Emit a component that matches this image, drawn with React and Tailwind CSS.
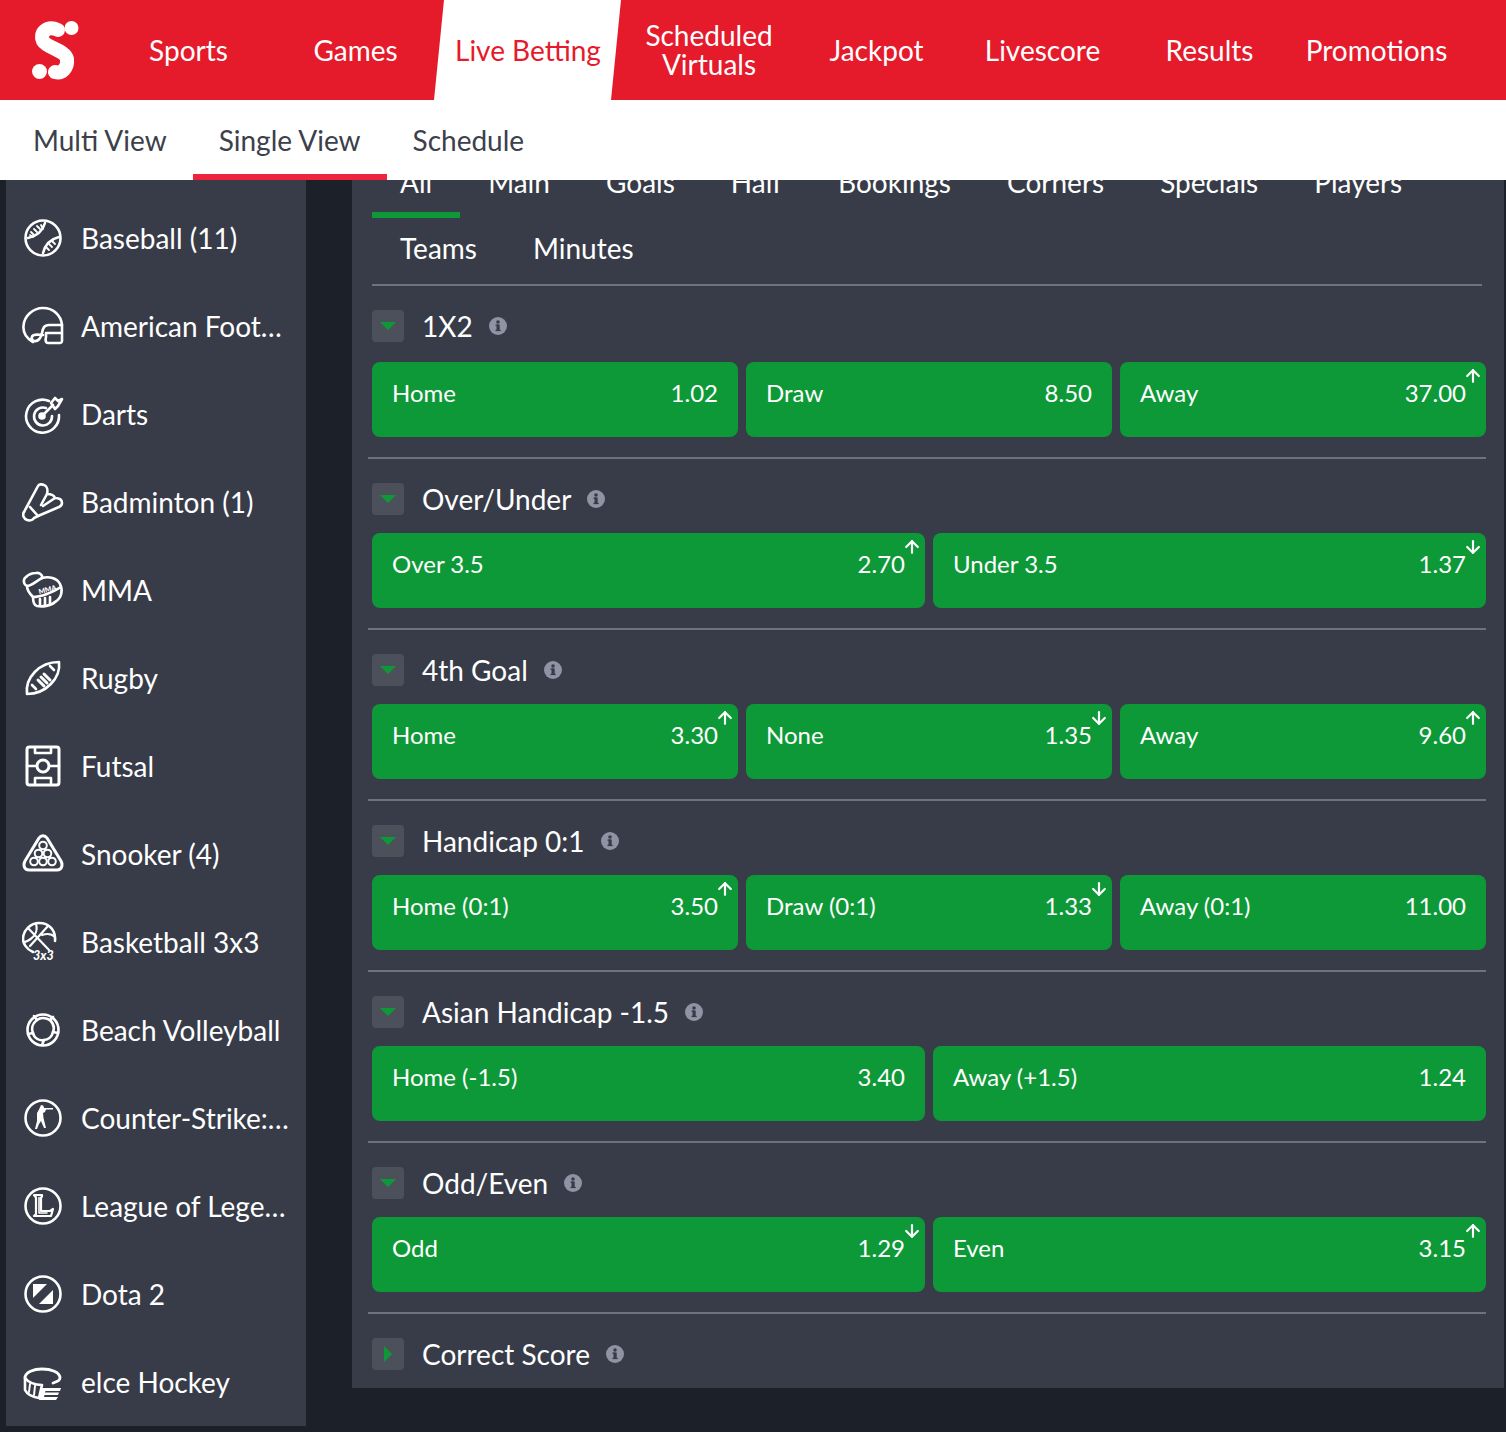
import { ArrowUp, ArrowDown } from 'lucide-react'

const font = "[font-family:Lato,'Liberation_Sans',sans-serif]"

const navItems = [
  { label: 'Sports', width: 'w-[167px]' },
  { label: 'Games', width: 'w-[167px]' },
  { label: 'Live Betting', width: 'w-[177px]', active: true },
  { label: 'Scheduled Virtuals', width: 'w-[186px]', small: true },
  { label: 'Jackpot', width: 'w-[149px]' },
  { label: 'Livescore', width: 'w-[183px]' },
  { label: 'Results', width: 'w-[151px]' },
  { label: 'Promotions', width: 'w-[183px]' },
]

const s = { fill: 'none', stroke: 'white', strokeWidth: 2.6, strokeLinecap: 'round', strokeLinejoin: 'round' }

function Icon({ children }) {
  return (
    <svg width="42" height="42" viewBox="0 0 42 42" className="shrink-0">
      {children}
    </svg>
  )
}

const icons = {
  baseball: (
    <g {...s}>
      <circle cx="21" cy="21" r="17.5" />
      <path d="M23 6C21 13 15 19 6 21M37 20C29 22 23 28 21 36" />
      <path d="M15 9l3 3M12 12l3 3M9 15l3 3M30 24l3 3M27 27l3 3M24 30l3 3M19 8l2 4M8 18l3 2" strokeWidth="1.8" />
    </g>
  ),
  football: (
    <g {...s}>
      <path d="M11 37C4 33 1 27 1.500 21C2 11 11 3 21 3C31 3 39 10 40 20H27C22 20 21 23 20 28C19 33 16 37 12 36C9 35 9 31 12 30C15 29 18 30 21 30" />
      <path d="M24 28H40M40 20V36C40 37 39 38 38 38H26C24 38 23 36 24 32V28" />
    </g>
  ),
  darts: (
    <g {...s}>
      <path d="M27 8A16.500 16.500 0 1 0 37 22" />
      <path d="M24 15A9 9 0 1 0 30 23" />
      <circle cx="20" cy="23" r="2.500" fill="white" />
      <path d="M20 23L31 12" />
      <path d="M29 10L33 5L36 8L40 6L36 13L33 16Z" />
    </g>
  ),
  badminton: (
    <g {...s}>
      <path d="M2 31L16 5C17 3 20 3 22 4C25 5 26 9 25 13C29 13 32 14 33 17C37 17 40 18 40 22C40 24 39 25 37 26L16 35" />
      <path d="M25 13L19 24M33 17L21 25" />
      <path d="M2 31C0 34 2 38 5 39C8 40 11 39 12 37L16 35L8 26" />
    </g>
  ),
  mma: (
    <g {...s}>
      <path d="M5 17C1 15 1 10 4 8C6 6 10 4 14 4C18 3 21 7 20 9C27 7 35 9 38 15C41 21 40 29 33 33C29 37 20 38 15 37C11 36 11 31 11 28C8 25 5 21 5 17Z" />
      <path d="M5 17C9 17 13 13 20 9M11 28C18 28 30 24 39 18M18 30V36M23 29V36M28 28V35" />
      <text x="26" y="23" fontSize="7" fontWeight="900" fill="white" stroke="none" textAnchor="middle" transform="rotate(-14 26 23)" fontFamily="Lato">MMA</text>
    </g>
  ),
  rugby: (
    <g {...s}>
      <path d="M5 37C3 21 17 5 37 5C39 21 24 37 5 37Z" />
      <path d="M10 28L14 32M28 9L32 13" />
      <path d="M16 23L22 29M19 20L25 26M22 17L28 23" strokeWidth="3" />
    </g>
  ),
  futsal: (
    <g {...s}>
      <rect x="5" y="2" width="32" height="38" rx="2.500" strokeWidth="3" />
      <path d="M5 21H14M28 21H37M13 3V8H29V3M13 39V33H29V39" strokeWidth="2.600" />
      <circle cx="21" cy="21" r="6" strokeWidth="3" />
    </g>
  ),
  snooker: (
    <g {...s}>
      <path d="M17 5C19 2 23 2 25 5L39 28C41 32 40 37 35 37H7C2 37 1 32 3 28Z" strokeWidth="3" />
      <g strokeWidth="2">
        <circle cx="21" cy="12.500" r="3.800" />
        <circle cx="16.500" cy="20.500" r="3.800" />
        <circle cx="25.500" cy="20.500" r="3.800" />
        <circle cx="12" cy="28.500" r="3.800" />
        <circle cx="21" cy="28.500" r="3.800" />
        <circle cx="30" cy="28.500" r="3.800" />
      </g>
    </g>
  ),
  basket: (
    <g>
      <g {...s}>
        <path d="M11 31C4 28 1 22 1 18C1 9 9 2 17 2C27 2 34 9 33 20" />
        <path d="M6 7L27 29M26 5L8 25M14 3C16 10 13 17 3 21M20 14C26 12 30 13 33 16" strokeWidth="2.200" />
      </g>
      <text x="11" y="39" fontSize="12.500" fontWeight="900" fontStyle="italic" fill="white" fontFamily="Lato">3x3</text>
    </g>
  ),
  beach: (
    <g {...s}>
      <circle cx="21" cy="21" r="15.500" />
      <path d="M15 11C19 8 24 9 28 11C31 14 33 18 31 23C30 28 26 31 22 31C17 32 12 29 11 24C9 19 11 14 15 11Z" />
      <path d="M15 11L12 7M28 11L31 8M31 23L36 24M22 31L20 36M11 24L6 25" />
    </g>
  ),
  cs: (
    <g>
      <circle cx="21" cy="21" r="17.500" {...s} />
      <path d="M19 8C21 8 22 9 22 11H31V12.500H24L23 15L21 16L21.500 21L24 31H22L19 24L17 27L15 32H13L15 24L15 16L17 12.500Z" fill="white" />
    </g>
  ),
  lol: (
    <g {...s}>
      <circle cx="21" cy="21" r="17.500" />
      <path d="M12 10H20V11.500L19 12.500V26H28L31 24L29 31H12L14 29V12.500Z" strokeWidth="2.200" />
      <path d="M17 12.500V28H25" strokeWidth="1.600" />
    </g>
  ),
  dota: (
    <g>
      <circle cx="21" cy="21" r="17.500" {...s} />
      <path d="M11 11H21L25 11L11 25Z" fill="white" />
      <path d="M31 31H21L17 31L31 17Z" fill="white" />
    </g>
  ),
  hockey: (
    <g>
      <g {...s}>
        <path d="M3 17C3 11 12 8 20 8C29 8 38 11 38 17C38 20 34 21 31 22" strokeWidth="2.800" />
        <path d="M3 17C7 22 14 24 20 24L17 37C10 36 5 33 3 29Z" />
        <path d="M8 23L7 31M13 25L12 34" strokeWidth="2" />
      </g>
      <path d="M20 27H39L38 30H23.500L23 31.500H37L36 34H22.500L22 36H36L34 39H17Z" fill="white" />
    </g>
  ),
}

const sports = [
  { name: 'Baseball (11)', icon: 'baseball' },
  { name: 'American Football', icon: 'football' },
  { name: 'Darts', icon: 'darts' },
  { name: 'Badminton (1)', icon: 'badminton' },
  { name: 'MMA', icon: 'mma' },
  { name: 'Rugby', icon: 'rugby' },
  { name: 'Futsal', icon: 'futsal' },
  { name: 'Snooker (4)', icon: 'snooker' },
  { name: 'Basketball 3x3', icon: 'basket' },
  { name: 'Beach Volleyball', icon: 'beach' },
  { name: 'Counter-Strike: GO', icon: 'cs' },
  { name: 'League of Legends', icon: 'lol' },
  { name: 'Dota 2', icon: 'dota' },
  { name: 'elce Hockey', icon: 'hockey' },
]

const tabsTop = ['All', 'Main', 'Goals', 'Half', 'Bookings', 'Corners', 'Specials', 'Players']

const markets = [
  { title: '1X2', gap: 'mt-5', outcomes: [['Home', '1.02'], ['Draw', '8.50'], ['Away', '37.00', 'up']] },
  { title: 'Over/Under', outcomes: [['Over 3.5', '2.70', 'up'], ['Under 3.5', '1.37', 'down']] },
  { title: '4th Goal', outcomes: [['Home', '3.30', 'up'], ['None', '1.35', 'down'], ['Away', '9.60', 'up']] },
  { title: 'Handicap 0:1', outcomes: [['Home (0:1)', '3.50', 'up'], ['Draw (0:1)', '1.33', 'down'], ['Away (0:1)', '11.00']] },
  { title: 'Asian Handicap -1.5', outcomes: [['Home (-1.5)', '3.40'], ['Away (+1.5)', '1.24']] },
  { title: 'Odd/Even', outcomes: [['Odd', '1.29', 'down'], ['Even', '3.15', 'up']] },
]

function Logo() {
  return (
    <svg width="105" height="100" viewBox="0 0 105 100" className="shrink-0">
      <circle cx="71.500" cy="28" r="7" fill="white" />
      <circle cx="39.500" cy="71.500" r="7.500" fill="white" />
      <path d="M58 30C47 25 39 33 43 41C47 48 65 50 67 59C68 68 62 74 55 72" fill="none" stroke="white" strokeWidth="14" strokeLinecap="round" />
    </svg>
  )
}

function NavItem({ item }) {
  if (item.active) {
    return (
      <div className={`${item.width} h-full -skew-x-[5.7deg] bg-white flex items-center justify-center`}>
        <span className="skew-x-[5.7deg] text-[28px] text-[#e51a2b] whitespace-nowrap">{item.label}</span>
      </div>
    )
  }
  return (
    <div className={`${item.width} h-full flex items-center justify-center text-center text-white text-[28px] ${item.small ? 'leading-[29px] px-6' : ''}`}>
      {item.label}
    </div>
  )
}

function SubTab({ label, active }) {
  return (
    <div className={`h-full px-[26px] flex items-center border-y-[6px] border-t-transparent text-[28px] text-[#3c404b] ${active ? 'border-b-[#f0233f]' : 'border-b-transparent'}`}>
      {label}
    </div>
  )
}

function SportRow({ sport }) {
  return (
    <div className="h-[88px] pl-4 flex items-center gap-[17px]">
      <Icon>{icons[sport.icon]}</Icon>
      <span className="w-[214px] truncate text-[28px] text-white">{sport.name}</span>
    </div>
  )
}

function MarketTab({ label, active }) {
  return (
    <div className={`h-[66px] px-7 flex items-center border-b-[6px] text-[28px] text-white ${active ? 'border-[#0e9938]' : 'border-transparent'}`}>
      {label}
    </div>
  )
}

function Toggle({ open }) {
  return (
    <div className="w-8 h-8 rounded bg-[#4c505b] flex items-center justify-center shrink-0">
      {open ? (
        <div className="w-0 h-0 border-x-[8px] border-x-transparent border-t-[8px] border-t-[#0e9938]" />
      ) : (
        <div className="w-0 h-0 border-y-[8px] border-y-transparent border-l-[8px] border-l-[#0e9938]" />
      )}
    </div>
  )
}

function Info() {
  return (
    <svg width="18" height="18" viewBox="0 0 18 18" className="shrink-0">
      <circle cx="9" cy="9" r="9" fill="#8f93a3" />
      <rect x="7.500" y="7.500" width="3.200" height="6.500" fill="#383c48" />
      <rect x="6.500" y="7.500" width="3" height="1.300" fill="#383c48" />
      <rect x="6.500" y="12.800" width="5.200" height="1.300" fill="#383c48" />
      <circle cx="9" cy="5" r="1.800" fill="#383c48" />
    </svg>
  )
}

function MarketHeader({ title, open }) {
  return (
    <div className="h-8 flex items-center">
      <Toggle open={open} />
      <span className="ml-[18px] mr-4 text-[28px] text-white whitespace-nowrap">{title}</span>
      <Info />
    </div>
  )
}

function Outcome({ label, odds, trend }) {
  return (
    <div className="relative h-[75px] rounded-lg bg-[#0e9938] pl-5 pr-5 pt-[14px] flex justify-between text-[24px] leading-[34px] text-white">
      <span>{label}</span>
      <span>{odds}</span>
      {trend === 'up' && <ArrowUp size={20} strokeWidth={2.6} className="absolute top-[4px] right-[3px]" />}
      {trend === 'down' && <ArrowDown size={20} strokeWidth={2.6} className="absolute top-[4px] right-[3px]" />}
    </div>
  )
}

function Market({ market }) {
  const cols = market.outcomes.length === 3 ? 'grid-cols-3' : 'grid-cols-2'
  return (
    <div className="border-b-2 border-[#6f727c] pl-1 pb-5 pt-6">
      <MarketHeader title={market.title} open />
      <div className={`${market.gap || 'mt-[18px]'} grid ${cols} gap-2`}>
        {market.outcomes.map((o) => (
          <Outcome key={o[0]} label={o[0]} odds={o[1]} trend={o[2]} />
        ))}
      </div>
    </div>
  )
}

export default function App() {
  return (
    <div className={`w-[1506px] h-[1432px] overflow-hidden bg-[#1c2029] ${font}`}>
      <header className="h-[100px] bg-[#e51a2b] flex overflow-hidden">
        <Logo />
        {navItems.map((item) => (
          <NavItem key={item.label} item={item} />
        ))}
      </header>
      <nav className="h-20 bg-white pl-[7px] flex">
        <SubTab label="Multi View" />
        <SubTab label="Single View" active />
        <SubTab label="Schedule" />
      </nav>
      <div className="pl-[6px] flex items-start gap-[46px]">
        <aside className="w-[300px] pt-[14px] bg-[#383c48]">
          {sports.map((sport) => (
            <SportRow key={sport.icon} sport={sport} />
          ))}
        </aside>
        <main className="w-[1152px] h-[1208px] overflow-hidden bg-[#383c48]">
          <div className="-mt-[28px] ml-5 w-[1110px] border-b-2 border-[#6f727c]">
            <div className="flex">
              {tabsTop.map((t, i) => (
                <MarketTab key={t} label={t} active={i === 0} />
              ))}
            </div>
            <div className="flex">
              <MarketTab label="Teams" />
              <MarketTab label="Minutes" />
            </div>
          </div>
          <div className="ml-4 w-[1118px]">
            {markets.map((m) => (
              <Market key={m.title} market={m} />
            ))}
            <div className="pl-1 pt-6">
              <MarketHeader title="Correct Score" />
            </div>
          </div>
        </main>
      </div>
    </div>
  )
}
